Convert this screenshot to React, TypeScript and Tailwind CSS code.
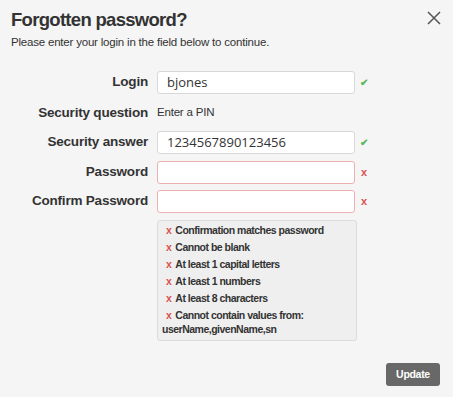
import { type FC, type JSX } from "react";

interface FieldRow {
    label: string,
    value?: string,
    status: "ok" | "bad",
}

const rules: string[] = [
    "Confirmation matches password",
    "Cannot be blank",
    "At least 1 capital letters",
    "At least 1 numbers",
    "At least 8 characters",
];

const Mark: FC<{ status: "ok" | "bad" }> = ({ status }): JSX.Element =>
    status === "ok"
        ? <span className="ml-[5px] text-[10px] font-bold text-[#5cb85c]">✔</span>
        : <span className="ml-[6px] text-[11px] font-bold text-[#d9534f]">x</span>;

const InputRow: FC<FieldRow> = ({ label, value, status }): JSX.Element => (
    <div className="flex items-center h-[24px]">
        <label className="w-[148px] text-right text-[13.5px] tracking-[-0.2px] font-bold text-[#333]">{label}</label>
        <input
            readOnly
            value={value ?? ""}
            className={`ml-[9px] w-[198px] h-[23px] rounded-[3px] bg-white px-[9px] text-[13px] text-[#333] font-['Open_Sans',sans-serif] outline-none border ${status === "ok" ? "border-[#d8d8d8]" : "border-[#eeb1b1]"}`}
        />
        <Mark status={status} />
    </div>
);

const App: FC = (): JSX.Element => {
    return (
        <div className="w-[453px] h-[397px] bg-[#f5f5f5] font-['Liberation_Sans',Arial,sans-serif] text-[#333] relative overflow-hidden">
            <button className="absolute right-[12px] top-[11px] text-[#555]">
                <svg width="14" height="14" viewBox="0 0 14 14" stroke="currentColor" strokeWidth="1.5" fill="none">
                    <path d="M1 1 L13 13 M13 1 L1 13" />
                </svg>
            </button>

            <div className="px-[11px] pt-[9px]">
                <h3 className="text-[18.5px] leading-[22px] font-bold tracking-[-0.7px] text-[#333]">Forgotten password?</h3>
                <p className="mt-[4px] text-[11.5px] leading-[14px] tracking-[-0.2px] text-[#333]">Please enter your login in the field below to continue.</p>
            </div>

            <form className="mt-[21px] flex flex-col">
                <InputRow label="Login" value="bjones" status="ok" />
                <div className="flex items-center h-[24px] mt-[7px]">
                    <label className="w-[148px] text-right text-[13.5px] tracking-[-0.2px] font-bold">Security question</label>
                    <span className="ml-[9px] text-[11.5px] tracking-[-0.2px]">Enter a PIN</span>
                </div>
                <div className="mt-[5px]">
                    <InputRow label="Security answer" value="1234567890123456" status="ok" />
                </div>
                <div className="mt-[6px]">
                    <InputRow label="Password" status="bad" />
                </div>
                <div className="mt-[5px]">
                    <InputRow label="Confirm Password" status="bad" />
                </div>

                <div className="ml-[157px] mt-[7px] w-[200px] h-[121px] rounded-[3px] border border-[#dcdcdc] bg-[#efefef] pl-[4px] pt-[2px] text-[10.5px] font-bold leading-[14px] tracking-[-0.5px] text-[#333]">
                    {rules.map(rule => (
                        <div key={rule} className="mb-[3px]"><span className="text-[#d9534f] ml-[4px] mr-[4px]">x</span>{rule}</div>
                    ))}
                    <div><span className="text-[#d9534f] ml-[4px] mr-[4px]">x</span>Cannot contain values from:</div>
                    <div>userName,givenName,sn</div>
                </div>

                <div className="flex justify-end pr-[13px] mt-[22px]">
                    <button type="button" className="h-[23px] w-[54px] rounded-[3px] bg-[#686868] text-[10.5px] tracking-[-0.3px] font-bold text-white">Update</button>
                </div>
            </form>
        </div>
    );
}

export default App;
